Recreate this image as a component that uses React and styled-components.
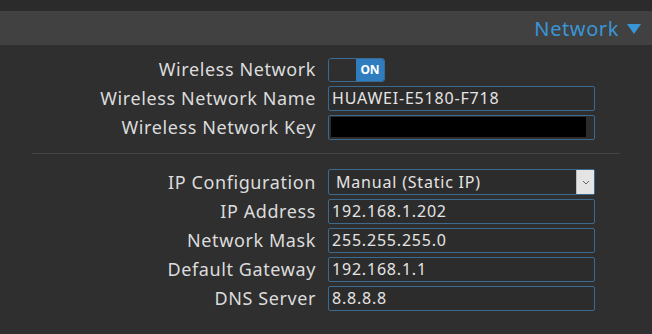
import React from "react";
import styled, { createGlobalStyle } from "styled-components";

const GlobalStyle = createGlobalStyle`
  body {
    margin: 0;
    background: #2f2f2f;
    font-family: "Noto Sans", "Open Sans", sans-serif;
  }
`;

const Page = styled.div`
  width: 652px;
  height: 334px;
  background: #2f2f2f;
  border-top: 11px solid #2b2b2b;
  box-sizing: border-box;
`;

const Header = styled.div`
  height: 34px;
  background: #414141;
  display: flex;
  align-items: center;
  justify-content: flex-end;
  padding-right: 11px;
  color: #3a95d6;
  font-size: 20px;
  letter-spacing: 0.6px;
  gap: 8px;
`;

const Caret = styled.span`
  width: 0;
  height: 0;
  border-left: 7px solid transparent;
  border-right: 7px solid transparent;
  border-top: 10px solid #3a95d6;
  margin-top: 2px;
`;

const Form = styled.div`
  padding-top: 12px;
`;

const Grid = styled.div`
  display: grid;
  grid-template-columns: 316px 267px;
  column-gap: 12px;
  row-gap: 4px;
  align-items: center;
`;

const Label = styled.div`
  text-align: right;
  color: #dcdcdc;
  font-size: 18px;
  letter-spacing: 0.6px;
  line-height: 25px;
  white-space: nowrap;
`;

const Separator = styled.div`
  height: 1px;
  background: #444;
  margin: 13px 32px 15px;
`;

const Toggle = styled.div`
  width: 57px;
  height: 24px;
  box-sizing: border-box;
  border: 1px solid #3b6b94;
  border-radius: 3px;
  display: flex;
  overflow: hidden;
`;

const ToggleOff = styled.div`
  flex: 1;
  background: #2f2f2f;
`;

const ToggleOn = styled.div`
  width: 28px;
  background: #2f7dbf;
  color: #fff;
  font-size: 12px;
  font-weight: bold;
  display: flex;
  align-items: center;
  justify-content: center;
`;

const Field = styled.div`
  height: ${(p) => (p.tall ? 26 : 25)}px;
  box-sizing: border-box;
  border: 1px solid #3c6a8f;
  border-radius: 2px;
  background: #2c2c2c;
  color: #e4e4e4;
  font-size: 16px;
  letter-spacing: 0.8px;
  line-height: 23px;
  padding-left: 3px;
  display: flex;
  align-items: center;
  white-space: nowrap;
`;

const Redacted = styled.div`
  width: 255px;
  height: 20px;
  background: #000;
  margin-left: -1px;
  align-self: flex-start;
  margin-top: 1px;
`;

const SelectText = styled.span`
  flex: 1;
  padding-left: 4px;
`;

const ArrowBox = styled.div`
  width: 17px;
  height: 100%;
  background: #e4e4e4;
  border-left: 1px solid #bdbdbd;
  display: flex;
  align-items: center;
  justify-content: center;
`;

const Row = ({ label, children }) => (
  <>
    <Label>{label}</Label>
    {children}
  </>
);

export default function App() {
  return (
    <Page>
      <GlobalStyle />
      <Header>
        Network
        <Caret />
      </Header>
      <Form>
        <Grid>
          <Row label="Wireless Network">
            <Toggle>
              <ToggleOff />
              <ToggleOn>ON</ToggleOn>
            </Toggle>
          </Row>
          <Row label="Wireless Network Name">
            <Field>HUAWEI-E5180-F718</Field>
          </Row>
          <Row label="Wireless Network Key">
            <Field>
              <Redacted />
            </Field>
          </Row>
        </Grid>
        <Separator />
        <Grid>
          <Row label="IP Configuration">
            <Field tall>
              <SelectText>Manual (Static IP)</SelectText>
              <ArrowBox>
                <svg width="8" height="5" viewBox="0 0 8 5">
                  <path d="M1 1l3 3 3-3" fill="none" stroke="#666" strokeWidth="1" />
                </svg>
              </ArrowBox>
            </Field>
          </Row>
          <Row label="IP Address">
            <Field>192.168.1.202</Field>
          </Row>
          <Row label="Network Mask">
            <Field>255.255.255.0</Field>
          </Row>
          <Row label="Default Gateway">
            <Field>192.168.1.1</Field>
          </Row>
          <Row label="DNS Server">
            <Field>8.8.8.8</Field>
          </Row>
        </Grid>
      </Form>
    </Page>
  );
}
